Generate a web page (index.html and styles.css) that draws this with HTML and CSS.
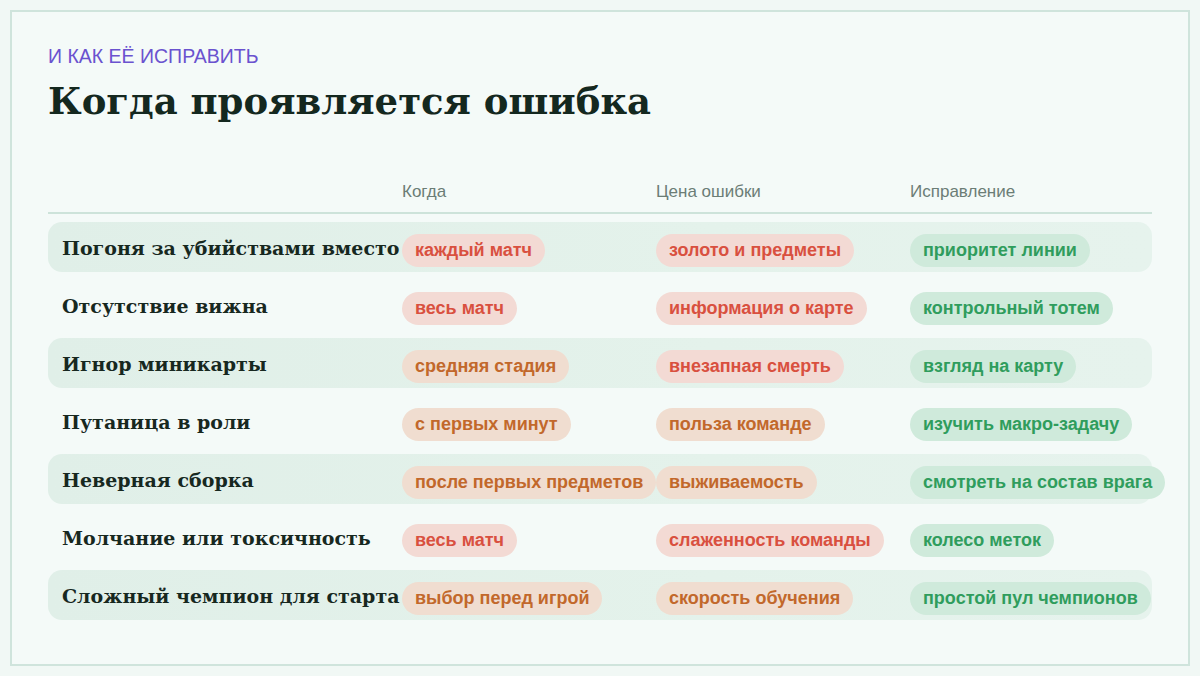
FILE: index.html
```html
<!DOCTYPE html>
<html lang="ru">
<head>
<meta charset="utf-8">
<title>Когда проявляется ошибка</title>
<link rel="stylesheet" href="styles.css">
</head>
<body>
<div class="frame">
  <div class="eyebrow">И КАК ЕЁ ИСПРАВИТЬ</div>
  <h1 class="title">Когда проявляется ошибка</h1>
  <div class="table">
    <div class="head">
      <div class="hcell"></div>
      <div class="hcell">Когда</div>
      <div class="hcell">Цена ошибки</div>
      <div class="hcell">Исправление</div>
    </div>
    <div class="row alt">
      <div class="label">Погоня за убийствами вместо фарма</div>
      <div class="cell"><span class="pill red">каждый матч</span></div>
      <div class="cell"><span class="pill red">золото и предметы</span></div>
      <div class="cell"><span class="pill green">приоритет линии</span></div>
    </div>
    <div class="row">
      <div class="label">Отсутствие вижна</div>
      <div class="cell"><span class="pill red">весь матч</span></div>
      <div class="cell"><span class="pill red">информация о карте</span></div>
      <div class="cell"><span class="pill green">контрольный тотем</span></div>
    </div>
    <div class="row alt">
      <div class="label">Игнор миникарты</div>
      <div class="cell"><span class="pill orange">средняя стадия</span></div>
      <div class="cell"><span class="pill red">внезапная смерть</span></div>
      <div class="cell"><span class="pill green">взгляд на карту</span></div>
    </div>
    <div class="row">
      <div class="label">Путаница в роли</div>
      <div class="cell"><span class="pill orange">с первых минут</span></div>
      <div class="cell"><span class="pill orange">польза команде</span></div>
      <div class="cell"><span class="pill green">изучить макро-задачу</span></div>
    </div>
    <div class="row alt">
      <div class="label">Неверная сборка</div>
      <div class="cell"><span class="pill orange">после первых предметов</span></div>
      <div class="cell"><span class="pill orange">выживаемость</span></div>
      <div class="cell"><span class="pill green">смотреть на состав врага</span></div>
    </div>
    <div class="row">
      <div class="label">Молчание или токсичность</div>
      <div class="cell"><span class="pill red">весь матч</span></div>
      <div class="cell"><span class="pill red">слаженность команды</span></div>
      <div class="cell"><span class="pill green">колесо меток</span></div>
    </div>
    <div class="row alt">
      <div class="label">Сложный чемпион для старта</div>
      <div class="cell"><span class="pill orange">выбор перед игрой</span></div>
      <div class="cell"><span class="pill orange">скорость обучения</span></div>
      <div class="cell"><span class="pill green">простой пул чемпионов</span></div>
    </div>
  </div>
</div>
</body>
</html>
```
FILE: styles.css
```css
* { box-sizing: border-box; }
html, body {
  margin: 0;
  padding: 0;
  background: #f1f8f5;
}
body {
  width: 1200px;
  height: 676px;
  padding: 10px;
  font-family: "Liberation Sans", Arial, sans-serif;
}
.frame {
  width: 1180px;
  height: 656px;
  border: 2px solid #cfe4dc;
  background: #f4faf8;
  padding: 33px 36px 0 36px;
}
.eyebrow {
  font-size: 19.5px;
  line-height: 22px;
  color: #6a52cf;
}
.title {
  margin: 10px 0 0 0;
  font-family: "DejaVu Serif", Georgia, serif;
  font-weight: bold;
  font-size: 37px;
  line-height: 48px;
  color: #14281f;
}
.table {
  margin-top: 47px;
  width: 1104px;
}
.head {
  display: grid;
  grid-template-columns: 354px 254px 254px 1fr;
  height: 42px;
  border-bottom: 2px solid #cde3da;
  padding-top: 10px;
}
.hcell {
  font-size: 17px;
  line-height: 20px;
  color: #6b7d76;
}
.row {
  display: grid;
  grid-template-columns: 354px 254px 254px 1fr;
  height: 50px;
  margin-top: 8px;
  border-radius: 14px;
}
.row.alt {
  background: linear-gradient(90deg, #e0efe8 0%, #e4f2eb 60%, #e6f3ed 100%);
}
.label {
  align-self: center;
  padding-left: 14px;
  font-family: "DejaVu Serif", Georgia, serif;
  font-weight: bold;
  font-size: 19px;
  line-height: 24px;
  color: #17281f;
  white-space: nowrap;
  overflow: hidden;
  margin-top: 1px;
}
.cell {
  padding-top: 12px;
  white-space: nowrap;
}
.pill {
  display: inline-block;
  height: 33px;
  line-height: 33px;
  padding: 0 13px;
  border-radius: 17px;
  font-weight: bold;
  font-size: 18px;
}
.pill.red { background: #f3dad4; color: #d9503f; }
.pill.orange { background: #f0ddd0; color: #c2682b; }
.pill.green { background: #cfeadb; color: #2f9d5d; }
```
